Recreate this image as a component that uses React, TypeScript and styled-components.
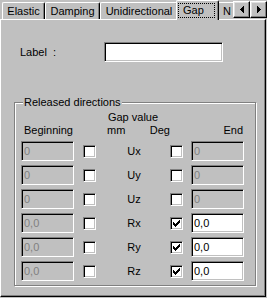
import React from 'react'
import styled, { createGlobalStyle } from 'styled-components'

const FACE = '#c0c0c0'
const SHADOW = '#808080'

const GlobalStyle = createGlobalStyle`
    html, body {
        margin: 0;
        padding: 0;
        background: ${FACE};
    }
    body {
        font-family: "Liberation Sans", Arial, sans-serif;
        font-size: 11px;
        color: #000;
    }
`

const Window = styled.div`
    width: 267px;
    height: 298px;
    display: flex;
    flex-direction: column;
    background: ${FACE};
    overflow: hidden;
`

const TabStrip = styled.div`
    display: flex;
    height: 19px;
`

const TabList = styled.div`
    flex: 1;
    min-width: 0;
    display: flex;
    align-items: flex-end;
    padding-left: 2px;
    overflow-x: clip;
    overflow-y: visible;
`

const Tab = styled.div<{ $w: number; $active?: boolean }>`
    flex: none;
    box-sizing: border-box;
    width: ${(p) => p.$w}px;
    height: ${(p) => (p.$active ? 20 : 17)}px;
    margin: 0 ${(p) => (p.$active ? -2 : 0)}px ${(p) => (p.$active ? -1 : 0)}px;
    position: relative;
    z-index: ${(p) => (p.$active ? 1 : 0)};
    padding-top: 2px;
    background: ${FACE};
    border: 1px solid #fff;
    border-right-color: #000;
    border-bottom: none;
    border-radius: 2px 2px 0 0;
    box-shadow: inset -1px 0 0 ${SHADOW};
    display: flex;
    justify-content: ${(p) => (p.$active ? 'flex-start' : 'center')};
    line-height: 13px;
    white-space: nowrap;
`

const FocusRing = styled.span`
    box-sizing: border-box;
    width: 37px;
    height: 15px;
    margin-left: 1px;
    padding-left: 4px;
    border: 1px dotted #000;
`

const Scroller = styled.div`
    display: flex;
    flex: none;
`

const ArrowButton = styled.div`
    box-sizing: border-box;
    width: 17px;
    height: 17px;
    margin-top: 1px;
    background: ${FACE};
    border: 1px solid;
    border-color: #fff #000 #000 #fff;
    box-shadow: inset -1px -1px 0 ${SHADOW}, inset 1px 1px 0 #dfdfdf;
    display: flex;
    align-items: center;
    justify-content: center;
`

const Panel = styled.div`
    box-sizing: border-box;
    width: 266px;
    height: 278px;
    padding-top: 22px;
    background: ${FACE};
    border: 1px solid;
    border-color: #fff #000 #000 #fff;
    box-shadow: inset -1px -1px 0 ${SHADOW};
    display: flex;
    flex-direction: column;
`

const LabelRow = styled.div`
    display: flex;
    align-items: center;
    height: 20px;
    padding-left: 19px;
`

const LabelText = styled.span`
    width: 84px;
    white-space: pre;
`

const Field = styled.input<{ $w: number }>`
    box-sizing: border-box;
    width: ${(p) => p.$w}px;
    height: 20px;
    margin: 0;
    padding: 0 0 0 2px;
    border: 1px solid;
    border-color: ${SHADOW} #fff #fff ${SHADOW};
    box-shadow: inset 1px 1px 0 #000, inset -1px -1px 0 ${FACE};
    background: #fff;
    color: #000;
    font: inherit;
    outline: none;

    &:disabled {
        background: ${FACE};
        color: ${SHADOW};
    }
`

const Group = styled.fieldset`
    box-sizing: border-box;
    width: 242px;
    min-width: 0;
    margin: 34px 0 0 13px;
    padding: 0;
    border: 1px solid ${SHADOW};
    box-shadow: inset 1px 1px 0 #fff, 1px 1px 0 #fff;
`

const Legend = styled.legend`
    margin-left: 8px;
    padding: 0 1px;
    line-height: 13px;
    background: ${FACE};
`

const GroupBody = styled.div`
    display: flex;
    flex-direction: column;
    gap: 4px;
    padding: 2px 0 4px 6px;
`

const COLUMNS = '62px 13px 74px 21px 53px'

const Header = styled.div`
    display: grid;
    grid-template-columns: ${COLUMNS};
    grid-template-rows: 13px 13px;
    line-height: 13px;
`

const GapTitle = styled.span`
    grid-column: 3;
    grid-row: 1;
    text-align: center;
    white-space: nowrap;
`

const Beginning = styled.span`
    grid-column: 1;
    grid-row: 2;
    padding-left: 3px;
`

const Units = styled.div`
    grid-column: 3;
    grid-row: 2;
    display: flex;
    justify-content: space-between;
    padding-left: 11px;
`

const End = styled.span`
    grid-column: 5;
    grid-row: 2;
    text-align: right;
    padding-right: 1px;
`

const Row = styled.div`
    display: grid;
    grid-template-columns: ${COLUMNS};
    height: 20px;
    align-items: center;
`

const Axis = styled.span`
    text-align: center;
    padding-left: 2px;
`

const Check = styled.span`
    box-sizing: border-box;
    width: 13px;
    height: 13px;
    border: 1px solid;
    border-color: ${SHADOW} #fff #fff ${SHADOW};
    box-shadow: inset 1px 1px 0 #000, inset -1px -1px 0 ${FACE};
    background: #fff;
    display: flex;
    align-items: center;
    justify-content: center;
`

const CheckMark = () => (
    <svg width="7" height="7" viewBox="0 0 7 7" shapeRendering="crispEdges">
        <path
            d="M0 2h1v3h-1z M1 3h1v3h-1z M2 4h1v3h-1z M3 3h1v3h-1z M4 2h1v3h-1z M5 1h1v3h-1z M6 0h1v3h-1z"
            fill="#000"
        />
    </svg>
)

const Arrow = ({ dir }: { dir: 'left' | 'right' }) => (
    <svg
        width="4"
        height="7"
        viewBox="0 0 4 7"
        shapeRendering="crispEdges"
        style={dir === 'right' ? { transform: 'scaleX(-1)' } : undefined}
    >
        <path d="M0 3h1v1h-1z M1 2h1v3h-1z M2 1h1v5h-1z M3 0h1v7h-1z" fill="#000" />
    </svg>
)

type Direction = {
    axis: string
    start: string
    deg: boolean
}

const DIRECTIONS: Direction[] = [
    { axis: 'Ux', start: '0', deg: false },
    { axis: 'Uy', start: '0', deg: false },
    { axis: 'Uz', start: '0', deg: false },
    { axis: 'Rx', start: '0,0', deg: true },
    { axis: 'Ry', start: '0,0', deg: true },
    { axis: 'Rz', start: '0,0', deg: true },
]

const App = () => {
    return (
        <>
            <GlobalStyle />
            <Window>
                <TabStrip>
                    <TabList>
                        <Tab $w={43}>Elastic</Tab>
                        <Tab $w={55}>Damping</Tab>
                        <Tab $w={78}>Unidirectional</Tab>
                        <Tab $w={43} $active>
                            <FocusRing>Gap</FocusRing>
                        </Tab>
                        <Tab $w={20}>N</Tab>
                    </TabList>
                    <Scroller>
                        <ArrowButton>
                            <Arrow dir="left" />
                        </ArrowButton>
                        <ArrowButton>
                            <Arrow dir="right" />
                        </ArrowButton>
                    </Scroller>
                </TabStrip>
                <Panel>
                    <LabelRow>
                        <LabelText>{'Label  :'}</LabelText>
                        <Field $w={119} defaultValue="" />
                    </LabelRow>
                    <Group>
                        <Legend>Released directions</Legend>
                        <GroupBody>
                            <Header>
                                <GapTitle>Gap value</GapTitle>
                                <Beginning>Beginning</Beginning>
                                <Units>
                                    <span>mm</span>
                                    <span>Deg</span>
                                </Units>
                                <End>End</End>
                            </Header>
                            {DIRECTIONS.map((d) => (
                                <Row key={d.axis}>
                                    <Field $w={53} defaultValue={d.start} disabled />
                                    <Check />
                                    <Axis>{d.axis}</Axis>
                                    <Check>{d.deg && <CheckMark />}</Check>
                                    <Field $w={53} defaultValue={d.start} disabled={!d.deg} />
                                </Row>
                            ))}
                        </GroupBody>
                    </Group>
                </Panel>
            </Window>
        </>
    )
}

export default App
